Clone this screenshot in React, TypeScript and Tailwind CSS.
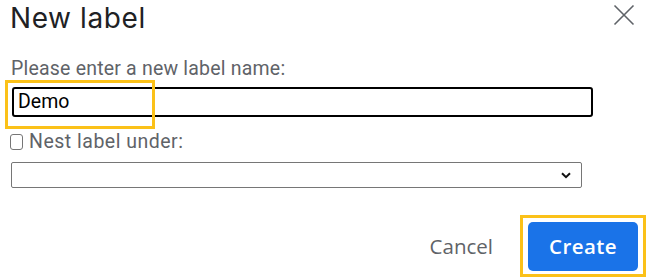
import React from "react";

function CloseIcon() {
  return (
    <svg width="22" height="22" viewBox="0 0 22 22" fill="none" stroke="#5f6368" strokeWidth="1.6">
      <path d="M1.5 1.5L20.5 20.5M20.5 1.5L1.5 20.5" />
    </svg>
  );
}

function Chevron() {
  return (
    <svg width="10" height="7" viewBox="0 0 10 7" fill="none" stroke="#111" strokeWidth="2">
      <path d="M1 1.2L5 5.2L9 1.2" />
    </svg>
  );
}

export default function App() {
  return (
    <div className="relative w-[650px] h-[278px] overflow-hidden bg-white font-['Roboto',sans-serif]">
      {/* header */}
      <div className="flex items-start justify-between pl-[10px] pr-[15px] pt-[1px]">
        <h1 className="text-[28px] leading-[34px] text-[#202124] font-['Inter',sans-serif] tracking-[0.6px]">
          New label
        </h1>
        <div className="pt-[3px]">
          <CloseIcon />
        </div>
      </div>

      {/* body */}
      <div className="pl-[11px] pt-[23px]">
        <label className="block text-[19.5px] leading-[22px] tracking-[0.2px] text-[#5f6368]">
          Please enter a new label name:
        </label>
        <div className="mt-[7px] ml-[1px] w-[581px] h-[30px] rounded-[3px] border-2 border-black flex items-center pl-[4px]">
          <span className="text-[19.5px] text-black">Demo</span>
        </div>

        <div className="mt-[14px] flex items-center gap-[6px] -ml-[1px]">
          <span className="block shrink-0 w-[13px] h-[16px] rounded-[3px] border-[1.5px] border-[#767676]" />
          <span className="text-[19.5px] leading-[22px] tracking-[0.5px] text-[#5f6368]">Nest label under:</span>
        </div>

        <div className="mt-[9px] w-[571px] h-[26px] rounded-[2px] border border-[#767676] flex items-center justify-end pr-[10px]">
          <Chevron />
        </div>
      </div>

      {/* actions */}
      <div className="flex items-center justify-end gap-[35px] pr-[12px] pt-[34px]">
        <button className="text-[20.5px] text-[#5f6368] font-['Open_Sans',sans-serif] font-medium">Cancel</button>
        <button className="w-[110px] h-[49px] rounded-[5px] bg-[#1a73e8] text-white text-[20.5px] font-semibold tracking-[0.4px] font-['Open_Sans',sans-serif]">
          Create
        </button>
      </div>

      {/* highlight annotations */}
      <div className="absolute left-[5px] top-[80px] w-[150px] h-[49px] border-[3px] border-[#fbc118]" />
      <div className="absolute left-[520px] top-[215px] w-[126px] h-[62px] border-[3px] border-[#fbc118]" />
    </div>
  );
}
